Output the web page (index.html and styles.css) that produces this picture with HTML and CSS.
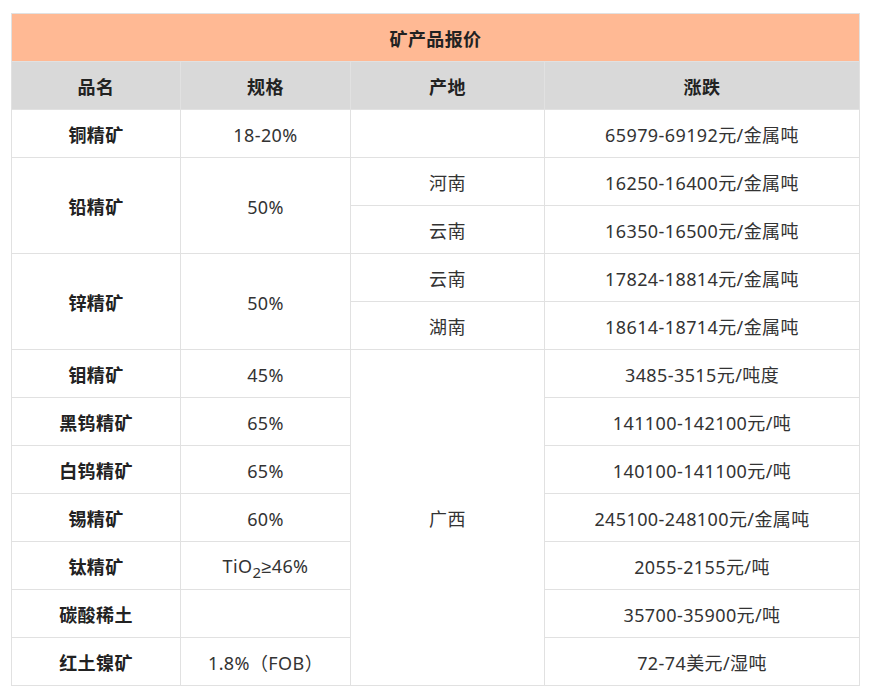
FILE: index.html
```html
<!DOCTYPE html>
<html lang="zh-CN">
<head>
<meta charset="utf-8">
<title>矿产品报价</title>
<link rel="stylesheet" href="styles.css">
</head>
<body>
<table class="price-table">
  <colgroup>
    <col class="c1"><col class="c2"><col class="c3"><col class="c4">
  </colgroup>
  <thead>
    <tr class="title-row"><th colspan="4">矿产品报价</th></tr>
    <tr class="head-row"><th>品名</th><th>规格</th><th>产地</th><th>涨跌</th></tr>
  </thead>
  <tbody>
    <tr><td class="name">铜精矿</td><td>18-20%</td><td></td><td>65979-69192元/金属吨</td></tr>
    <tr><td class="name" rowspan="2">铅精矿</td><td rowspan="2">50%</td><td>河南</td><td>16250-16400元/金属吨</td></tr>
    <tr><td>云南</td><td>16350-16500元/金属吨</td></tr>
    <tr><td class="name" rowspan="2">锌精矿</td><td rowspan="2">50%</td><td>云南</td><td>17824-18814元/金属吨</td></tr>
    <tr><td>湖南</td><td>18614-18714元/金属吨</td></tr>
    <tr><td class="name">钼精矿</td><td>45%</td><td rowspan="7">广西</td><td>3485-3515元/吨度</td></tr>
    <tr><td class="name">黑钨精矿</td><td>65%</td><td>141100-142100元/吨</td></tr>
    <tr><td class="name">白钨精矿</td><td>65%</td><td>140100-141100元/吨</td></tr>
    <tr><td class="name">锡精矿</td><td>60%</td><td>245100-248100元/金属吨</td></tr>
    <tr><td class="name">钛精矿</td><td>TiO<sub>2</sub><span class="sym">≥</span>46%</td><td>2055-2155元/吨</td></tr>
    <tr><td class="name">碳酸稀土</td><td></td><td>35700-35900元/吨</td></tr>
    <tr><td class="name">红土镍矿</td><td>1.8%（FOB）</td><td>72-74美元/湿吨</td></tr>
  </tbody>
</table>
</body>
</html>
```

FILE: styles.css
```css
html, body {
  margin: 0;
  padding: 0;
  background: #ffffff;
}

body {
  padding: 13px 0 0 11px;
  font-family: "Noto Sans", "Noto Sans CJK SC", sans-serif;
  color: #333333;
}

.price-table {
  border-collapse: collapse;
  table-layout: fixed;
  width: 848px;
  font-size: 18px;
  letter-spacing: 0.4px;
}

.c1 { width: 169px; }
.c2 { width: 170px; }
.c3 { width: 194px; }
.c4 { width: 315px; }

.price-table th,
.price-table td {
  border: 1px solid #e1e1e1;
  height: 48px;
  padding: 2px 0 0 0;
  box-sizing: border-box;
  text-align: center;
  vertical-align: middle;
  line-height: 20px;
  font-weight: 400;
}

.price-table th {
  font-weight: 700;
  color: #222222;
}

.title-row th {
  background: #ffb994;
}

.head-row th {
  background: #d9d9d9;
}

.price-table td.name {
  font-weight: 700;
  color: #222222;
}

.price-table sub {
  font-size: 15px;
  line-height: 0;
  vertical-align: -5px;
}

.sym {
  font-family: "Liberation Sans", "DejaVu Sans", sans-serif;
}
```
